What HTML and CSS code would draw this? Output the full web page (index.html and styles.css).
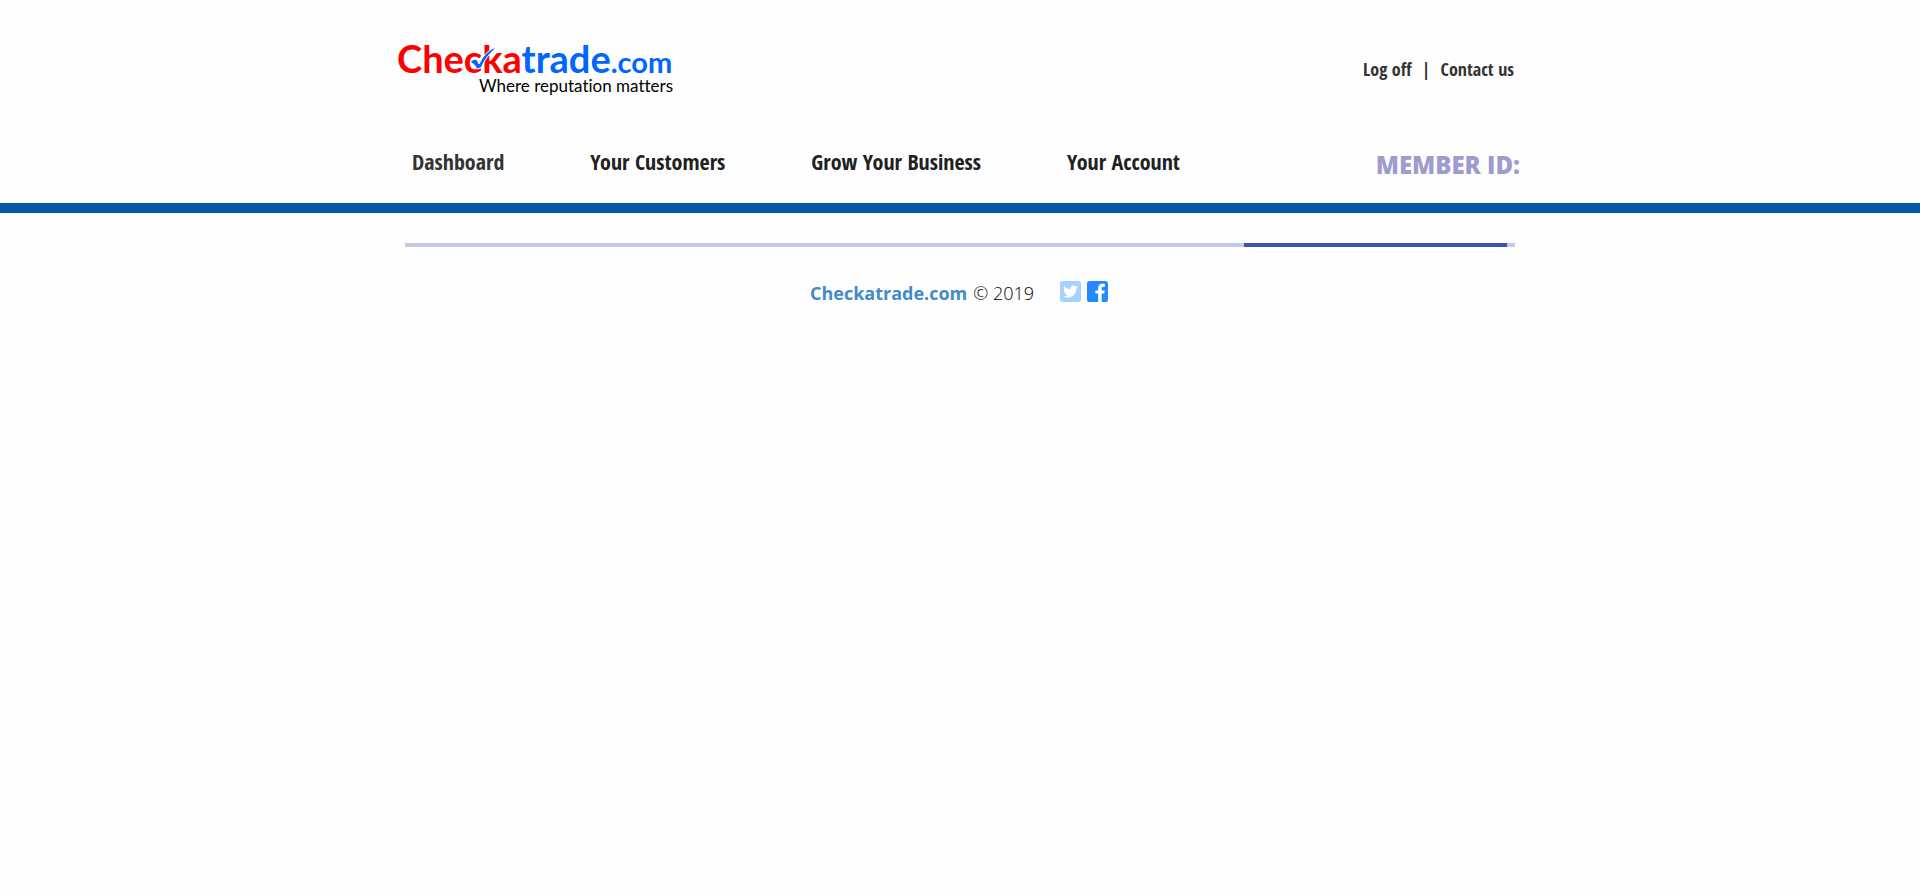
FILE: index.html
```html
<!DOCTYPE html>
<html lang="en">
<head>
<meta charset="utf-8">
<meta name="viewport" content="width=device-width, initial-scale=1">
<title>Checkatrade.com</title>
<link rel="stylesheet" href="styles.css">
</head>
<body>
<header class="header">
  <div class="container">
    <div class="topbar">
      <a class="logo" href="#" aria-label="Checkatrade.com home">
        <svg class="logo-art" viewBox="0 0 280 56" width="280" height="56">
          <text class="logo-name" x="-1" y="31"><tspan class="logo-red">Checka</tspan><tspan class="logo-blue">trade</tspan><tspan class="logo-com">.com</tspan></text>
          <path d="M72 20 Q75 17 78 17 Q80 19 81 22 Q87 9 98 5 L96 8 Q89 13 83 26 L79 27 Q77 22 72 20 Z" fill="#0066ff" stroke="#fff" stroke-width="1"/>
          <text class="logo-tag" x="275" y="50">Where reputation matters</text>
        </svg>
      </a>
      <nav class="account" aria-label="Account">
        <a href="#">Log off</a><span class="divider">|</span><a href="#">Contact us</a>
      </nav>
    </div>
    <div class="mainbar">
      <nav class="menu" aria-label="Main">
        <a class="current" href="#">Dashboard</a>
        <a href="#">Your Customers</a>
        <a href="#">Grow Your Business</a>
        <a href="#">Your Account</a>
      </nav>
      <div class="member">MEMBER ID:</div>
    </div>
  </div>
</header>
<main class="content">
  <div class="progress" role="progressbar" aria-label="Loading"><div class="progress-bar"></div></div>
</main>
<footer class="footer">
  <p class="copyright"><a href="#">Checkatrade.com</a><span>© 2019</span></p>
  <div class="social">
    <a class="twitter" href="#" aria-label="Twitter"><svg viewBox="0 0 448 448" width="21" height="21"><rect width="448" height="448" rx="56" fill="#a5d3fd"/><path transform="translate(0 -32)" fill="#fff" d="M351.100 190.800c.2 2.800.2 5.700.2 8.500 0 86.700-66 186.600-186.600 186.600-37.200 0-71.700-10.800-100.700-29.400 5.300.6 10.400.8 15.800.8 30.700 0 58.900-10.400 81.400-28-28.800-.6-53-19.500-61.300-45.500 10.100 1.500 19.200 1.500 29.600-1.200-30-6.100-52.500-32.500-52.500-64.400v-.8c8.700 4.900 18.900 7.900 29.600 8.300a65.447 65.447 0 0 1-29.200-54.600c0-12.200 3.200-23.400 8.900-33.100 32.300 39.800 80.800 65.800 135.200 68.600-9.300-44.500 24-80.600 64-80.600 18.900 0 35.900 7.900 47.900 20.700 14.800-2.800 29-8.300 41.600-15.800-4.900 15.200-15.200 28-28.800 36.100 13.200-1.400 26-5.100 37.800-10.200-8.900 13.100-20.100 24.700-32.900 34z"/></svg></a>
    <a class="facebook" href="#" aria-label="Facebook"><svg viewBox="0 0 448 448" width="21" height="21"><rect width="448" height="448" rx="56" fill="#238bff"/><path fill="#fff" d="M238 448V269h-60v-68h60v-52c0-59 35-91 90-91 26 0 53 5 53 5v58h-30c-29 0-38 18-38 37v43h66l-11 68h-55v179z"/></svg></a>
  </div>
</footer>
</body>
</html>
```
FILE: styles.css
```css
* {
  box-sizing: border-box;
}

body {
  margin: 0;
  background: #fefefe;
  color: #212121;
  font-family: "Segoe UI", "Open Sans", sans-serif;
}

a {
  color: inherit;
  text-decoration: none;
}

.header {
  border-bottom: 10px solid #0057a3;
}

.container {
  max-width: 1140px;
  margin: 0 auto;
  padding: 0 8px;
}

.topbar {
  display: flex;
  align-items: center;
  justify-content: space-between;
  padding: 42px 8px 0 0;
}

.logo-art {
  display: block;
  overflow: visible;
}

.logo-name {
  font: bold 38px Lato, sans-serif;
}

.logo-red {
  fill: #ff0000;
}

.logo-blue {
  fill: #0066ff;
}

.logo-com {
  font-size: 29px;
  fill: #0066ff;
}

.logo-tag {
  font: 400 17px Lato, sans-serif;
  font-variant-ligatures: none;
  fill: #000;
  text-anchor: end;
}

.account {
  display: flex;
  gap: 10px;
  padding-bottom: 2px;
  color: #333;
  font: bold 18px/24px "Open Sans Condensed", "Liberation Sans Narrow", "DejaVu Sans Condensed", sans-serif;
}

.divider {
  font-weight: 300;
}

.mainbar {
  display: flex;
  align-items: flex-end;
  justify-content: space-between;
  padding: 47px 2px 22px 14px;
}

.menu {
  display: flex;
  gap: 86px;
  padding-bottom: 4px;
  font: bold 22px/32px "Open Sans Condensed", "Liberation Sans Narrow", "DejaVu Sans Condensed", sans-serif;
}

.current {
  color: #333;
}

.member {
  color: #9c9ccf;
  font: 800 24px/32px "Open Sans", sans-serif;
}

.content {
  max-width: 1140px;
  margin: 0 auto;
  padding: 30px 15px;
}

.progress {
  height: 4px;
  background: #c5c9e8;
}

.progress-bar {
  width: 23.7%;
  height: 4px;
  margin-left: 75.6%;
  background: #3f51b5;
}

.footer {
  display: flex;
  justify-content: center;
  gap: 26px;
  padding-right: 2px;
  font-size: 18px;
  line-height: 32px;
}

.copyright {
  display: flex;
  gap: 6px;
  margin: 0;
  color: #000;
  font-weight: 300;
}

.copyright a {
  color: #428bca;
  font-weight: bold;
}

.social {
  display: flex;
  gap: 6px;
  padding-top: 4px;
}

.social svg {
  display: block;
}
```
